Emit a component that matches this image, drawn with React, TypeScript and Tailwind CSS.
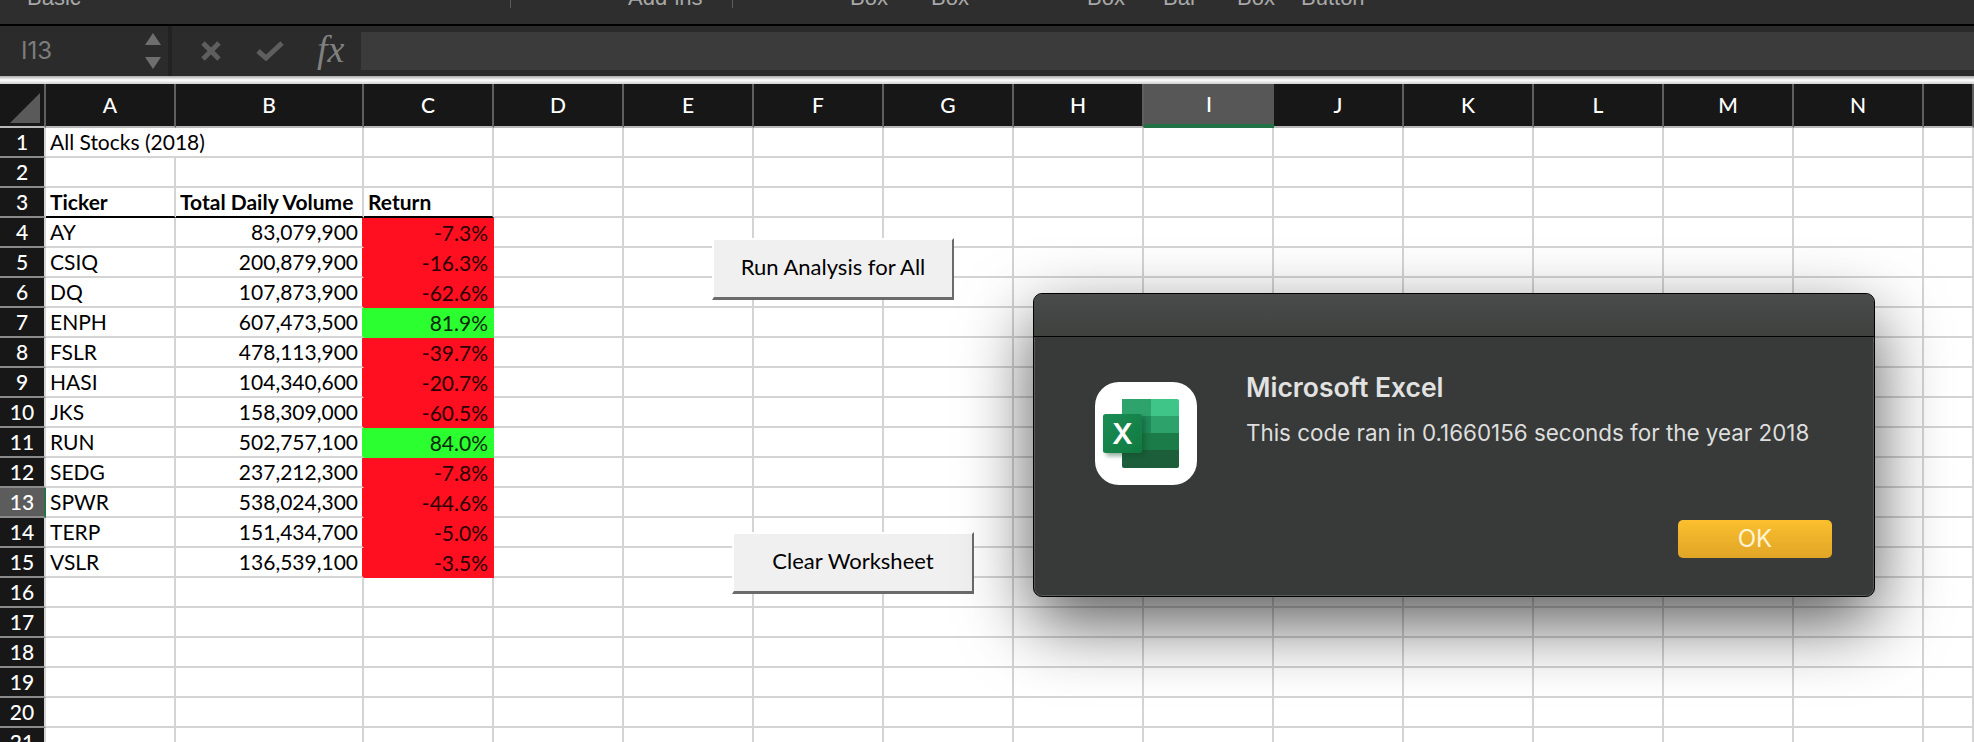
const COLUMNS = ["A", "B", "C", "D", "E", "F", "G", "H", "I", "J", "K", "L", "M", "N", ""];

const STOCKS = [
  { ticker: "AY", volume: "83,079,900", ret: "-7.3%" },
  { ticker: "CSIQ", volume: "200,879,900", ret: "-16.3%" },
  { ticker: "DQ", volume: "107,873,900", ret: "-62.6%" },
  { ticker: "ENPH", volume: "607,473,500", ret: "81.9%" },
  { ticker: "FSLR", volume: "478,113,900", ret: "-39.7%" },
  { ticker: "HASI", volume: "104,340,600", ret: "-20.7%" },
  { ticker: "JKS", volume: "158,309,000", ret: "-60.5%" },
  { ticker: "RUN", volume: "502,757,100", ret: "84.0%" },
  { ticker: "SEDG", volume: "237,212,300", ret: "-7.8%" },
  { ticker: "SPWR", volume: "538,024,300", ret: "-44.6%" },
  { ticker: "TERP", volume: "151,434,700", ret: "-5.0%" },
  { ticker: "VSLR", volume: "136,539,100", ret: "-3.5%" },
];

function RibbonLabels() {
  return (
    <div className="flex h-6 items-start overflow-hidden bg-[#2e2e2e] font-['Liberation_Sans',sans-serif] text-[22px] leading-6 text-[#a8a8a8]">
      <span className="-mt-[14px] ml-[27px] w-[483px]">Basic</span>
      <span className="h-2 w-px bg-[#5c5c5c]" />
      <span className="-mt-[14px] ml-[117px] w-[104px]">Add-ins</span>
      <span className="h-2 w-px bg-[#5c5c5c]" />
      <span className="-mt-[14px] ml-[117px] w-[81px]">Box</span>
      <span className="-mt-[14px] w-[156px]">Box</span>
      <span className="-mt-[14px] w-[76px]">Box</span>
      <span className="-mt-[14px] w-[74px]">Bar</span>
      <span className="-mt-[14px] w-[64px]">Box</span>
      <span className="-mt-[14px]">Button</span>
    </div>
  );
}

function FormulaBar() {
  return (
    <div className="flex h-[52px] border-t-2 border-black bg-[#2b2b2b]">
      <div className="flex w-[172px] shrink-0 items-center border-r-4 border-[#222222] pl-[21px] font-['Inter',sans-serif] text-[24px] text-[#7d7d7d]">
        <span className="w-[124px]">I13</span>
        <svg width="16" height="36" viewBox="0 0 16 36" className="fill-[#6e6e6e]">
          <path d="M8 0 L16 12 H0 Z" />
          <path d="M0 24 H16 L8 36 Z" />
        </svg>
      </div>
      <div className="flex flex-1 items-center">
        <svg width="20" height="20" viewBox="0 0 20 20" className="ml-[29px] stroke-[#5e5e5e]" fill="none" strokeWidth="5">
          <path d="M2 2 L18 18 M18 2 L2 18" />
        </svg>
        <svg width="28" height="20" viewBox="0 0 28 20" className="ml-[35px] stroke-[#5e5e5e]" fill="none" strokeWidth="5">
          <path d="M2 10 L10 17 L26 2" />
        </svg>
        <span className="ml-[33px] w-[44px] pb-1 font-['Liberation_Serif',serif] text-[38px] leading-none font-medium text-[#808080] italic">
          fx
        </span>
        <div className="h-[38px] flex-1 bg-[#3b3b3b]" />
      </div>
    </div>
  );
}

function ColumnHeader({ label }: { label: string }) {
  if (label === "I") {
    return (
      <div className="flex h-11 items-center justify-center border-b-4 border-[#217346] bg-[#575757] text-[21px] font-medium text-white">
        {label}
      </div>
    );
  }
  return (
    <div className="flex h-11 items-center justify-center border-r-2 border-b-2 border-r-[#5f5f5f] border-b-[#b9b9b9] bg-[#171717] text-[21px] font-medium text-white">
      {label}
    </div>
  );
}

function RowHeader({ n }: { n: number }) {
  if (n === 13) {
    return (
      <div className="flex h-[30px] items-center justify-center border-r-2 border-b-2 border-r-[#217346] border-b-[#8a8a8a] bg-[#5c5c5c] text-[21px] font-medium text-white">
        {n}
      </div>
    );
  }
  return (
    <div className="flex h-[30px] items-center justify-center border-r-2 border-b-2 border-r-[#d4d4d4] border-b-[#8a8a8a] bg-[#171717] text-[21px] font-medium text-white">
      {n}
    </div>
  );
}

function blank(key: string) {
  return <div key={key} className="h-[30px] border-r-2 border-b-2 border-[#d4d4d4]" />;
}

function StockRow({ rowNo, ticker, volume, ret }: { rowNo: number; ticker: string; volume: string; ret: string }) {
  const gain = !ret.startsWith("-");
  return (
    <>
      <RowHeader n={rowNo} />
      <div className="flex h-[30px] items-center border-r-2 border-b-2 border-[#d4d4d4] pl-[4px]">{ticker}</div>
      {gain ? (
        <div className="flex h-[30px] items-center justify-end border-r-2 border-r-[#2bff2f] border-b-2 border-b-[#d4d4d4] pr-1">{volume}</div>
      ) : (
        <div className="flex h-[30px] items-center justify-end border-r-2 border-r-[#ff0f1f] border-b-2 border-b-[#d4d4d4] pr-1">{volume}</div>
      )}
      {gain ? (
        <div className="flex h-[30px] items-center justify-end bg-[#2bff2f] pr-1.5 text-[#0a2a0a]">{ret}</div>
      ) : (
        <div className="flex h-[30px] items-center justify-end bg-[#ff0f1f] pr-1.5 text-[#2a0004]">{ret}</div>
      )}
      {COLUMNS.slice(3).map((c) => blank(`${rowNo}${c}`))}
    </>
  );
}

function RowRest({ n }: { n: number }) {
  return (
    <>
      <RowHeader n={n} />
      {COLUMNS.map((c) => blank(`${n}${c}`))}
    </>
  );
}

function Sheet() {
  const rows = [16, 17, 18, 19, 20, 21];
  return (
    <div className="grid grid-cols-[46px_130px_188px_130px_repeat(11,130px)_50px] bg-white font-['Lato',sans-serif] text-[21px] text-black">
      <div className="flex h-11 items-end border-r-2 border-b-2 border-r-[#5f5f5f] border-b-[#b9b9b9] bg-[#171717] pb-[3px] pl-[10px]">
        <svg width="30" height="30" viewBox="0 0 30 30" className="fill-[#5a5a5a]">
          <path d="M30 0 V30 H0 Z" />
        </svg>
      </div>
      {COLUMNS.map((c) => (
        <ColumnHeader key={c} label={c} />
      ))}

      <RowHeader n={1} />
      <div className="col-span-2 flex h-[30px] items-center border-r-2 border-b-2 border-[#d4d4d4] pl-[4px]">All Stocks (2018)</div>
      {COLUMNS.slice(2).map((c) => blank(`1${c}`))}

      <RowHeader n={2} />
      {COLUMNS.map((c) => blank(`2${c}`))}

      <RowHeader n={3} />
      <div className="flex h-[30px] items-center border-r-2 border-b-2 border-r-[#d4d4d4] border-b-black pl-[4px] font-bold">Ticker</div>
      <div className="flex h-[30px] items-center border-r-2 border-b-2 border-r-[#d4d4d4] border-b-black pl-[4px] font-bold">Total Daily Volume</div>
      <div className="flex h-[30px] items-center border-r-2 border-b-2 border-r-[#d4d4d4] border-b-black pl-[4px] font-bold">Return</div>
      {COLUMNS.slice(3).map((c) => blank(`3${c}`))}

      {STOCKS.map((s, i) => (
        <StockRow key={s.ticker} rowNo={i + 4} ticker={s.ticker} volume={s.volume} ret={s.ret} />
      ))}

      {rows.map((n) => (
        <RowRest key={n} n={n} />
      ))}
    </div>
  );
}

function MacroButton({ label, className }: { label: string; className: string }) {
  return (
    <button
      className={`absolute flex h-[62px] w-[242px] items-center justify-center border-t-2 border-r-2 border-b-[3px] border-l-2 border-t-white border-r-[#6b6b6b] border-b-[#6b6b6b] border-l-white bg-[#f0f0f0] pb-1 font-['Lato',sans-serif] text-[22px] text-black ${className}`}
    >
      {label}
    </button>
  );
}

function ExcelIcon() {
  return (
    <div className="flex h-[103px] w-[102px] shrink-0 items-center justify-center rounded-[24px] bg-white">
      <svg width="102" height="103" viewBox="0 0 102 103">
        <defs>
          <linearGradient id="chip" x1="0" y1="0" x2="1" y2="1">
            <stop offset="0" stopColor="#1a8d55" />
            <stop offset="1" stopColor="#107a40" />
          </linearGradient>
          <filter id="soft" x="-20%" y="-20%" width="140%" height="140%">
            <feGaussianBlur stdDeviation="2" />
          </filter>
        </defs>
        <rect x="27" y="17" width="29" height="18" fill="#2fa36c" />
        <path d="M56 17 H82 a2 2 0 0 1 2 2 V35 H56 Z" fill="#3fc587" />
        <rect x="27" y="34" width="29" height="18" fill="#21885a" />
        <rect x="56" y="34" width="28" height="18" fill="#2ea26b" />
        <rect x="27" y="51" width="29" height="18" fill="#1b7a48" />
        <rect x="56" y="51" width="28" height="18" fill="#1c7c49" />
        <path d="M27 68 H84 V84 a2 2 0 0 1 -2 2 H29 a2 2 0 0 1 -2 -2 Z" fill="#1c5e3a" />
        <rect x="11" y="35" width="39" height="39" rx="2" fill="#0b4a28" opacity="0.45" filter="url(#soft)" />
        <rect x="8" y="32" width="39" height="39" rx="2.5" fill="url(#chip)" />
        <text x="27.5" y="62" textAnchor="middle" fontFamily="Inter, sans-serif" fontSize="29" fontWeight="600" fill="#ffffff">
          X
        </text>
      </svg>
    </div>
  );
}

function AlertDialog() {
  return (
    <div className="absolute top-[293px] left-[1033px] flex h-[304px] w-[842px] flex-col rounded-[9px] border border-black bg-[#383a39] font-['Inter',sans-serif] shadow-[inset_0_0_0_1px_rgba(255,255,255,0.16),0_26px_70px_rgba(0,0,0,0.65)]">
      <div className="h-[43px] rounded-t-[8px] border-b border-black bg-gradient-to-b from-[#4a4c4b] to-[#3f413f]" />
      <div className="flex flex-1 flex-col pr-[42px] pb-[38px]">
        <div className="flex pt-[45px] pl-[61px]">
          <ExcelIcon />
          <div className="pl-[49px]">
            <h2 className="mt-[-12px] text-[26.5px] leading-[34px] font-semibold text-[#e2e2e2]">Microsoft Excel</h2>
            <p className="mt-[15px] text-[22.4px] leading-7 text-[#dedede]">This code ran in 0.1660156 seconds for the year 2018</p>
          </div>
        </div>
        <button className="mt-auto flex h-[38px] w-[154px] items-center justify-center self-end rounded-[5px] bg-gradient-to-b from-[#fbbf2f] to-[#e0a526] text-[24px] text-[#fff4d4]">
          OK
        </button>
      </div>
    </div>
  );
}

export default function App() {
  return (
    <div className="relative h-[742px] w-[1974px] overflow-hidden bg-white">
      <RibbonLabels />
      <FormulaBar />
      <div className="h-2 bg-gradient-to-b from-[#a8a8a8] via-white to-[#cfcfcf]" />
      <Sheet />
      <MacroButton label="Run Analysis for All" className="top-[238px] left-[712px]" />
      <MacroButton label="Clear Worksheet" className="top-[532px] left-[732px]" />
      <AlertDialog />
    </div>
  );
}
